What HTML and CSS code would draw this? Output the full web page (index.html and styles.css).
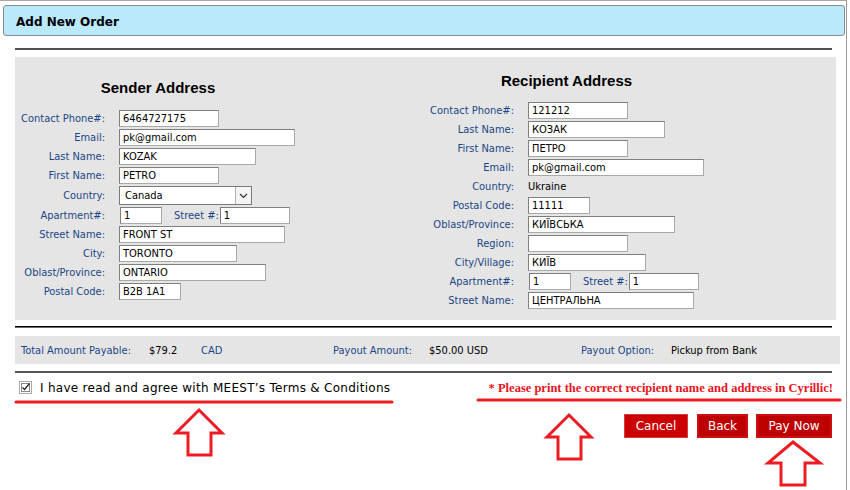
FILE: index.html
```html
<!DOCTYPE html>
<html>
    <head>
        <link rel="stylesheet" href="styles.css">
    </head>
    <body>
        <div class="page">
            <div class="title-bar">Add New Order</div>

            <div class="content">
                <div class="rule rule-top"></div>

                <div class="address-panel">
                    <div class="address-col sender">
                        <h2>Sender Address</h2>
                        <div class="form">
                            <label>Contact Phone#:</label>
                            <div class="field"><input class="w100" type="text" value="6464727175"></div>
                            <label>Email:</label>
                            <div class="field"><input class="w176" type="text" value="pk@gmail.com"></div>
                            <label>Last Name:</label>
                            <div class="field"><input class="w137" type="text" value="KOZAK"></div>
                            <label>First Name:</label>
                            <div class="field"><input class="w100" type="text" value="PETRO"></div>
                            <label>Country:</label>
                            <div class="field field-select">
                                <div class="select">
                                    <span class="select-text">Canada</span>
                                    <span class="select-btn">
                                        <svg width="9" height="6" viewBox="0 0 9 6"><path d="M1 1 L4.5 4.5 L8 1" fill="none" stroke="#333" stroke-width="1.2"/></svg>
                                    </span>
                                </div>
                            </div>
                            <label>Apartment#:</label>
                            <div class="field">
                                <input class="w42 apt" type="text" value="1">
                                <span class="inline-label">Street #:</span>
                                <input class="w70" type="text" value="1">
                            </div>
                            <label>Street Name:</label>
                            <div class="field"><input class="w166" type="text" value="FRONT ST"></div>
                            <label>City:</label>
                            <div class="field"><input class="w118" type="text" value="TORONTO"></div>
                            <label>Oblast/Province:</label>
                            <div class="field"><input class="w147" type="text" value="ONTARIO"></div>
                            <label>Postal Code:</label>
                            <div class="field"><input class="w62" type="text" value="B2B 1A1"></div>
                        </div>
                    </div>

                    <div class="address-col recipient">
                        <h2>Recipient Address</h2>
                        <div class="form">
                            <label>Contact Phone#:</label>
                            <div class="field"><input class="w100" type="text" value="121212"></div>
                            <label>Last Name:</label>
                            <div class="field"><input class="w137" type="text" value="КОЗАК"></div>
                            <label>First Name:</label>
                            <div class="field"><input class="w100" type="text" value="ПЕТРО"></div>
                            <label>Email:</label>
                            <div class="field"><input class="w176" type="text" value="pk@gmail.com"></div>
                            <label>Country:</label>
                            <div class="field"><span class="plain">Ukraine</span></div>
                            <label>Postal Code:</label>
                            <div class="field"><input class="w62" type="text" value="11111"></div>
                            <label>Oblast/Province:</label>
                            <div class="field"><input class="w147" type="text" value="КИЇВСЬКА"></div>
                            <label>Region:</label>
                            <div class="field"><input class="w100" type="text" value=""></div>
                            <label>City/Village:</label>
                            <div class="field"><input class="w118" type="text" value="КИЇВ"></div>
                            <label>Apartment#:</label>
                            <div class="field">
                                <input class="w42 apt" type="text" value="1">
                                <span class="inline-label">Street #:</span>
                                <input class="w70" type="text" value="1">
                            </div>
                            <label>Street Name:</label>
                            <div class="field"><input class="w166" type="text" value="ЦЕНТРАЛЬНА"></div>
                        </div>
                    </div>
                </div>

                <div class="rule rule-mid"></div>

                <div class="summary">
                    <span class="lbl">Total Amount Payable:</span>
                    <span class="val">$79.2</span>
                    <span class="lbl">CAD</span>
                    <span class="lbl">Payout Amount:</span>
                    <span class="val">$50.00 USD</span>
                    <span class="lbl">Payout Option:</span>
                    <span class="val">Pickup from Bank</span>
                </div>

                <div class="rule rule-bottom"></div>

                <div class="agree-row">
                    <div class="agree">
                        <svg class="checkbox" width="13" height="13" viewBox="0 0 13 13">
                            <rect x="0.5" y="0.5" width="12" height="12" fill="#fff" stroke="#555" stroke-dasharray="1 1"/>
                            <rect x="2.5" y="2.5" width="8" height="8" fill="none" stroke="#888"/>
                            <path d="M3.5 6.5 L5.5 8.5 L10.5 2.5" fill="none" stroke="#222" stroke-width="1.2"/>
                        </svg>
                        <span>I have read and agree with MEEST’s Terms &amp; Conditions</span>
                    </div>
                    <div class="note">* Please print the correct recipient name and address in Cyrillic!</div>
                </div>

                <div class="actions">
                    <button class="btn btn-cancel">Cancel</button>
                    <button class="btn btn-back">Back</button>
                    <button class="btn btn-pay">Pay Now</button>
                </div>
            </div>

            <!-- red markup drawn over the form -->
            <svg class="marks" width="850" height="490" viewBox="0 0 850 490">
                <g fill="none" stroke="#ed1c24" stroke-width="3" stroke-linecap="round" stroke-linejoin="miter">
                    <line x1="16" y1="402" x2="392" y2="402"/>
                    <line x1="478" y1="400" x2="840" y2="400"/>
                    <polygon points="199,410 222,433 211,433 211,455 188,455 188,433 176,433"/>
                    <polygon points="569,415 591,437 581,437 581,459 558,459 558,437 547,437"/>
                    <polygon points="793,442 820,463 805,463 805,485 781,485 781,463 768,463"/>
                </g>
            </svg>
        </div>
    </body>
</html>
```

FILE: styles.css
```css
body {
    margin: 0;
    background: #fff;
    font-family: "DejaVu Sans", Verdana, sans-serif;
}
.page {
    position: relative;
    width: 846px;
    height: 489px;
    border-top: 1px solid #a8a8a8;
    border-right: 1px solid #9a9a9a;
}
.title-bar {
    margin: 4px 1px 0 3px;
    height: 27px;
    padding-top: 2px;
    line-height: 29px;
    padding-left: 12px;
    background-color: #b9e9fb;
    border: 1px solid #8c8c8c;
    border-radius: 3px;
    font-weight: bold;
    font-size: 12px;
    color: #000;
    overflow: hidden;
}
.content {
    padding-left: 15px;
}
.rule {
    width: 817px;
}
.rule-top {
    margin-top: 12px;
    height: 2px;
    background-color: #505050;
}
.rule-mid {
    margin-top: 6px;
    height: 1px;
    border-bottom: 1px solid #666;
    background-color: #000;
}
.rule-bottom {
    margin-top: 7px;
    height: 2px;
    background-color: #555;
}

/* address block */
.address-panel {
    margin-top: 7px;
    width: 821px;
    height: 263px;
    background-color: #e5e5e5;
    display: grid;
    grid-template-columns: 286px 1fr;
}
.address-col h2 {
    margin: 0;
    text-align: center;
    font-family: "Liberation Sans", Arial, sans-serif;
    font-size: 15px;
    line-height: 20px;
    color: #000;
}
.sender {
    padding-top: 21px;
}
.sender h2 {
    margin-bottom: 12px;
}
.recipient {
    padding-top: 14px;
}
.recipient h2 {
    margin-bottom: 11px;
    padding-right: 4px;
}
.form {
    display: grid;
    grid-template-columns: 90px auto;
    column-gap: 14px;
    row-gap: 2px;
    align-items: center;
}
.recipient .form {
    grid-template-columns: 213px auto;
}
.form label,
.inline-label,
.summary .lbl {
    color: #1b4586;
}
.form label {
    text-align: right;
    white-space: nowrap;
}
.form label,
.field,
.summary {
    font-size: 11px;
    font-stretch: condensed;
}
.field {
    display: flex;
    align-items: center;
    height: 17px;
}
.field input {
    box-sizing: border-box;
    height: 17px;
    margin: 0;
    padding: 0 3px;
    border: 1px solid #7f7f7f;
    border-right-color: #a9a9a9;
    border-bottom-color: #a9a9a9;
    background: #fff;
    font-family: "DejaVu Sans", Verdana, sans-serif;
    font-size: 11px;
    font-stretch: condensed;
    color: #000;
}
.plain {
    color: #000;
}
.apt {
    margin-left: 1px !important;
}
.inline-label {
    margin: 0 1px 0 12px;
    white-space: nowrap;
}
.w42 { width: 42px; }
.w62 { width: 62px; }
.w70 { width: 70px; }
.w100 { width: 100px; }
.w118 { width: 118px; }
.w137 { width: 137px; }
.w147 { width: 147px; }
.w166 { width: 166px; }
.w176 { width: 176px; }

.field-select {
    height: 19px;
}
.select {
    box-sizing: border-box;
    width: 133px;
    height: 19px;
    display: flex;
    align-items: center;
    background: #fff;
    border: 1px solid #7a7a7a;
}
.select-text {
    flex: 1;
    padding-left: 5px;
    color: #000;
}
.select-btn {
    box-sizing: border-box;
    width: 16px;
    height: 17px;
    display: flex;
    align-items: center;
    justify-content: center;
    border-left: 1px solid #b0b0b0;
    background: #f4f4f4;
}

/* totals */
.summary {
    margin-top: 8px;
    width: 825px;
    height: 28px;
    box-sizing: border-box;
    padding-left: 6px;
    background-color: #e5e5e5;
    display: grid;
    grid-template-columns: 128px 52px 132px 96px 152px 90px auto;
    align-items: center;
    color: #000;
}

/* agreement */
.agree-row {
    width: 818px;
    height: 30px;
    display: flex;
    justify-content: space-between;
    align-items: center;
}
.agree {
    display: flex;
    align-items: center;
    padding-left: 4px;
    font-size: 12px;
    letter-spacing: 0.28px;
    color: #000;
}
.checkbox {
    margin-right: 8px;
    margin-top: -2px;
}
.note {
    font-family: "Liberation Serif", "Times New Roman", serif;
    font-weight: bold;
    font-size: 12.5px;
    color: #e8141c;
}

.actions {
    width: 817px;
    margin-top: 11px;
    display: flex;
    justify-content: flex-end;
    gap: 9px;
}
.btn {
    height: 24px;
    padding: 0;
    font-family: "DejaVu Sans", Verdana, sans-serif;
    font-size: 12px;
    color: #fff;
    background-color: #cc0000;
    border: 1px solid #d63a3a;
    cursor: pointer;
}
.btn-cancel { width: 64px; }
.btn-back {
    width: 51px;
    background-color: #bd0000;
    border: 2px solid #cf1010;
}
.btn-pay {
    width: 76px;
    margin-left: -1px;
    background-color: #bd0000;
    border: 2px solid #cf1010;
}

.marks {
    position: absolute;
    top: -1px;
    left: 0;
    pointer-events: none;
}
```
